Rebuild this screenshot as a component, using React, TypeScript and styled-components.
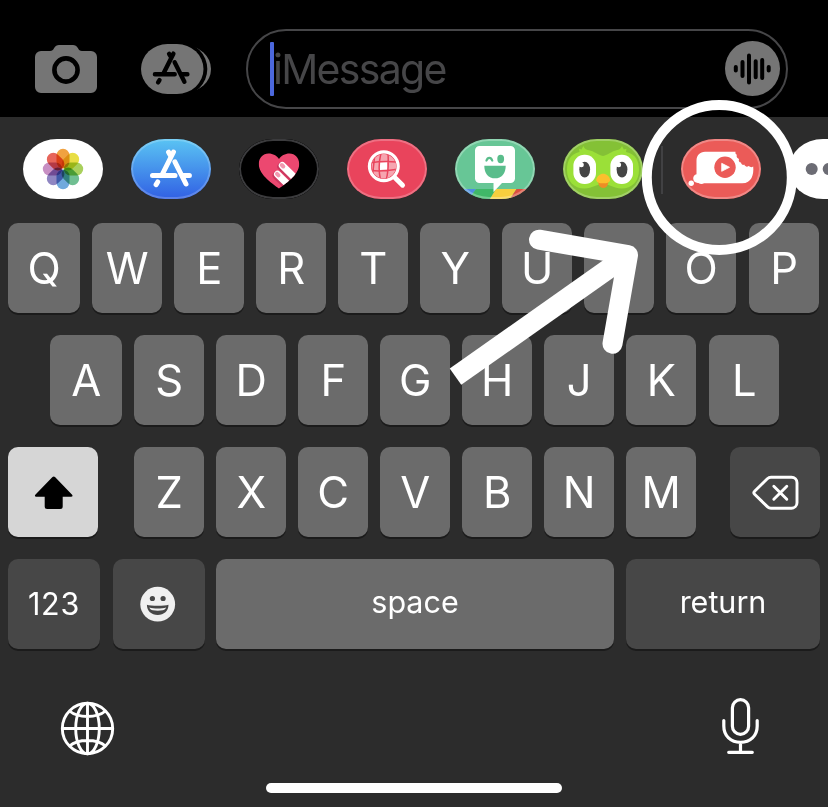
import React from "react";
import styled, { createGlobalStyle } from "styled-components";

const GlobalStyle = createGlobalStyle`
  * { box-sizing: border-box; }
  body { margin: 0; background: #2c2c2c; overflow: hidden; }
`;

const Screen = styled.main`
  position: relative;
  width: 828px;
  height: 807px;
  overflow: hidden;
  background: #2c2c2c;
  color: #fff;
  font-family: Inter, "Liberation Sans", sans-serif;
  display: flex;
  flex-direction: column;
  svg { display: block; flex: none; }
`;

const ComposeBar = styled.header`
  height: 117px;
  flex: none;
  background: #000;
  display: flex;
  align-items: center;
  padding: 21px 40px 0 35px;
`;

const BarIcon = styled.span<{ $gap: number }>`
  margin-right: ${(p) => p.$gap}px;
`;

const MessageField = styled.div`
  width: 542px;
  height: 80px;
  border: 2px solid #464648;
  border-radius: 40px;
  display: flex;
  align-items: center;
  padding: 0 6px 1px 22px;
`;

const Caret = styled.span`
  width: 4px;
  height: 54px;
  border-radius: 1px;
  background: #4c68dd;
`;

const Placeholder = styled.span`
  flex: 1;
  margin-left: -1px;
  padding-top: 1px;
  font-size: 41px;
  line-height: 50px;
  letter-spacing: -1.7px;
  color: #464648;
`;

const AppStrip = styled.nav`
  height: 106px;
  flex: none;
  display: flex;
  align-items: flex-start;
  padding: 22px 0 0 23px;
`;

const Tile = styled.div<{ $bg: string; $edge?: string; $gap?: number }>`
  position: relative;
  flex: none;
  width: 80px;
  height: 60px;
  margin-right: ${(p) => p.$gap ?? 28}px;
  border-radius: 34px / 30px;
  overflow: hidden;
  background: ${(p) => p.$bg};
  &::after {
    content: "";
    position: absolute;
    inset: 0;
    border-radius: inherit;
    border: 2px solid ${(p) => p.$edge ?? "transparent"};
  }
`;

const Divider = styled.span`
  flex: none;
  width: 2px;
  height: 48px;
  margin: 7px 18px 0 0;
  background: #414143;
`;

const Keys = styled.section`
  display: flex;
  flex-direction: column;
  gap: 22px;
`;

const Row = styled.div<{ $left: number }>`
  display: flex;
  padding-left: ${(p) => p.$left}px;
`;

const Key = styled.button<{ $w?: number; $gap?: number; $tone?: "dark" | "lit"; $label?: boolean }>`
  flex: none;
  width: ${(p) => p.$w ?? 70}px;
  height: 90px;
  margin: 0 ${(p) => p.$gap ?? 12}px 0 0;
  padding: 2px 0 0;
  border: 0;
  border-radius: 10px;
  display: flex;
  align-items: center;
  justify-content: center;
  background: ${(p) => (p.$tone === "dark" ? "#474747" : p.$tone === "lit" ? "#d6d6d6" : "#6b6b6b")};
  box-shadow: 0 2px 0 #1b1b1b;
  color: #fff;
  font-family: inherit;
  font-weight: 400;
  font-size: ${(p) => (p.$label ? 30.5 : 43.5)}px;
  line-height: 1;
  svg { overflow: visible; }
`;

const Label = styled.span<{ $drop?: number; $track?: number }>`
  padding-bottom: ${(p) => p.$drop ?? 0}px;
  letter-spacing: ${(p) => p.$track ?? 0}px;
`;

const Dock = styled.footer`
  flex: 1;
  display: flex;
  justify-content: space-between;
  align-items: flex-start;
  padding: 49px 68px 0 60px;
`;

const GlobeSlot = styled.span`
  padding-top: 3px;
`;

const HomeBar = styled.div`
  flex: none;
  width: 296px;
  height: 10px;
  margin: 0 auto 14px 266px;
  border-radius: 5px;
  background: #fff;
`;

const Markup = styled.svg`
  position: absolute;
  inset: 0;
  pointer-events: none;
`;

const StoreGlyph = ({ color, transform }: { color: string; transform?: string }) => (
  <g transform={transform} stroke={color} strokeWidth="5" strokeLinecap="round" fill="none">
    <path d="M42.500 13 31.200 35.500M37.600 13.200l2.400 4.200" />
    <path d="M21.500 36.500h22.500M51.700 36.500h6.700M26.700 43l-1.600 2.600" />
    <path d="M43.900 22.800 55 45" />
  </g>
);

const CameraIcon = () => (
  <svg width="62" height="48" viewBox="0 0 62 48">
    <path
      fill="#757575"
      d="M6 6h9c2.200 0 3-1 4-2.700C20.300 1 22 0 24 0h14c2 0 3.700 1 5 3.300C44 5 44.800 6 47 6h9a6 6 0 0 1 6 6v30a6 6 0 0 1-6 6H6a6 6 0 0 1-6-6V12a6 6 0 0 1 6-6z"
    />
    <circle cx="31" cy="25" r="11.600" fill="none" stroke="#000" strokeWidth="4.600" />
  </svg>
);

const AppsIcon = () => (
  <svg width="70" height="50" viewBox="0 0 70 50">
    <rect x="6" y="1.500" width="64" height="47" rx="26" ry="23.500" fill="#757575" />
    <rect x="0" y="-2" width="66.300" height="54" rx="27" fill="#000" />
    <rect width="62.500" height="50" rx="26.500" ry="25" fill="#757575" />
    <StoreGlyph color="#000" transform="translate(-5 -1.800) scale(.88)" />
  </svg>
);

const AudioIcon = () => (
  <svg width="55" height="55" viewBox="0 0 55 55">
    <circle cx="27.500" cy="27.500" r="27.500" fill="#757575" />
    <path
      d="M10.800 26v3.600M17.500 21v14M24 14.500v27M30.700 20.300v16M37.200 19v18M43.700 26v3.600"
      stroke="#000"
      strokeWidth="4"
      strokeLinecap="round"
    />
  </svg>
);

const petals = ["#f0a240", "#e8de45", "#a9d05c", "#70bf92", "#70a9dd", "#8f86c2", "#c78fc3", "#e7655a"];

const Petal = styled.rect`
  mix-blend-mode: multiply;
`;

const PhotosArt = () => (
  <svg width="80" height="60">
    {petals.map((c, i) => (
      <Petal
        key={c}
        x="33.500"
        y="9.800"
        width="13"
        height="19.500"
        rx="6.500"
        fill={c}
        transform={`rotate(${i * 45} 40 30)`}
      />
    ))}
  </svg>
);

const StoreArt = () => (
  <svg width="80" height="60">
    <StoreGlyph color="#fff" />
  </svg>
);

const HeartArt = () => (
  <svg width="80" height="60">
    <defs>
      <clipPath id="heart">
        <path d="M39.500 49.500C35 46 19.300 36.500 19.300 25c0-6.200 4.200-10.400 9.700-10.400 4.600 0 8.300 2.300 10.500 5.400 2.200-3.100 5.900-5.400 10.500-5.400 5.500 0 9.700 4.200 9.700 10.400C59.700 36.500 44 46 39.500 49.500z" />
      </clipPath>
    </defs>
    <g clipPath="url(#heart)" transform="translate(.5 0)">
      <rect width="80" height="60" fill="#ec4870" />
      <g strokeLinecap="round" fill="none">
        <path d="M41.700 27.500 57 43M37 36.500 52 51" stroke="#b92f55" strokeWidth="8" opacity=".6" />
        <path d="M42.800 26.500 58 41.500M38 35.300 53 50" stroke="#fff" strokeWidth="7" />
        <path d="m42.300 26 1.500 1.500M37.500 34.800l1.500 1.500" stroke="#f299b1" strokeWidth="4" />
      </g>
    </g>
  </svg>
);

const SearchArt = () => (
  <svg width="80" height="60">
    <defs>
      <clipPath id="lens">
        <circle cx="36.800" cy="27.300" r="12.400" />
      </clipPath>
    </defs>
    <path d="m48 38.700 7.600 7.600" stroke="#fff" strokeWidth="4.800" strokeLinecap="round" />
    <circle cx="36.800" cy="27.300" r="14.400" fill="#e9445c" stroke="#fff" strokeWidth="3.200" />
    <g clipPath="url(#lens)">
      <circle cx="36.800" cy="27.300" r="12.400" fill="#f6a5b0" />
      <path d="M33 23.500l7-.5.500 7.200-7.500.8z" fill="#fff" />
      <path
        d="M34 14c-2 8-2.500 18-.5 27M41 14c.5 9 1 18-2 27M23 24c9-2 18-2 28-1M23 31.500c9 1 18 .5 28-1.500M28 14l-3 27"
        stroke="#e9445c"
        strokeWidth="1.500"
        fill="none"
      />
    </g>
  </svg>
);

const WinkArt = () => (
  <svg width="80" height="60">
    <path d="M0 50h21l-7 10H0z" fill="#4f8fe0" />
    <path d="M21 50h20l-6 10H14z" fill="#40b768" />
    <path d="M41 50h20.500L55 60H35z" fill="#f6cf3e" />
    <path d="M61.500 50H80v10H55z" fill="#dc4f3f" />
    <path
      d="M24.500 7h31a4.500 4.500 0 0 1 4.500 4.500v28a4.500 4.500 0 0 1-4.500 4.500H47l-8.500 9V44h-14a4.500 4.500 0 0 1-4.500-4.500v-28A4.500 4.500 0 0 1 24.500 7z"
      fill="#fff"
    />
    <path d="M29.300 26.700h21.400c0 8-4.200 12.600-10.700 12.600s-10.700-4.600-10.700-12.600z" fill="#59bd8b" />
    <ellipse cx="45.700" cy="20" rx="3.400" ry="4.200" fill="#59bd8b" />
    <path d="M31.500 21.500c1.200-3.600 4.500-3.600 5.700 0" stroke="#59bd8b" strokeWidth="2.300" strokeLinecap="round" fill="none" />
  </svg>
);

const OwlArt = () => (
  <svg width="80" height="60">
    <path
      d="M20.300 7c1.200 3 2.700 3.700 5.700 4.200 5 .8 9 4.800 14 5.800 5-1 9-5 13.500-5.800 3-.5 4.200-1.500 5.500-4.200l1.800 3.500 2.700-.8-.5 3.300C73 15 76 22 76 31c0 11-7 18.500-17.500 18.500-8 0-11.500-4.500-18.500-4.500s-10.500 4.500-18.500 4.500C11 49.500 4 42 4 31c0-9 3-16 12.500-18l-.5-3.300 2.500.8z"
      fill="#9be038"
    />
    <rect x="10.400" y="15.700" width="22.600" height="29.300" rx="11" fill="#fff" />
    <rect x="47.400" y="15.700" width="22.600" height="29.300" rx="11" fill="#fff" />
    <ellipse cx="21.700" cy="30.600" rx="5.400" ry="7.900" fill="#454545" />
    <ellipse cx="59" cy="30.600" rx="5.400" ry="7.900" fill="#454545" />
    <circle cx="18.300" cy="25.800" r="2.500" fill="#fff" />
    <circle cx="55.600" cy="25.800" r="2.500" fill="#fff" />
    <path d="M35 41h10.500c0 5-2 8-5.200 8S35 46 35 41z" fill="#ee8d25" />
    <path d="M33.300 40.500C34 37.500 37 34.800 40.200 34.800s6.200 2.700 6.900 5.700c.5 3-3.500 3.800-6.900 3.800s-7.400-.8-6.900-3.800z" fill="#fcc02d" />
  </svg>
);

const ClipArt = () => (
  <svg width="80" height="60">
    <path
      d="M24 12.700h30.500c-.3 1.700.3 2.600 1.300 3-.7 2 .5 3.700 2.200 4.200-.8 2 .5 3.600 2 3.500.2 2 2 3 3.200 2.200 1 2 2.800 2.600 4.300 1.500 2 1.200 3.200 1.500 4.700.3.8 8-1.500 16.800-11 16.800H23c-1 1-4 1-5.500-.2-3 .3-5.300-1.700-5.300-4.400 0-2.400 1.300-3.900 3.300-4.400V21.500c0-5 3.500-8.800 8.500-8.800z"
      fill="#fff"
    />
    <circle cx="10.200" cy="44.300" r="2.700" fill="#fff" />
    <circle cx="44" cy="28.300" r="10.700" fill="#eb5b58" />
    <path d="M40.700 24.300v8l7.800-4z" fill="#fff" stroke="#fff" strokeWidth=".8" strokeLinejoin="round" />
  </svg>
);

const MoreArt = () => (
  <svg width="80" height="60" fill="#6c6c74">
    <circle cx="22.700" cy="30" r="6" />
    <circle cx="39.700" cy="30" r="6" />
    <circle cx="56.700" cy="30" r="6" />
  </svg>
);

const ShiftIcon = () => (
  <svg width="38" height="34" viewBox="-.7 0 38 34">
    <path
      d="M17.800 1c.8-.8 1.700-.8 2.500 0l17.100 17.700c.9 1 .3 2-.9 2H28v9.800a2.500 2.500 0 0 1-2.500 2.500h-13a2.500 2.500 0 0 1-2.500-2.500v-9.800H1.500c-1.200 0-1.700-1-.9-2z"
      fill="#000"
    />
  </svg>
);

const DeleteIcon = () => (
  <svg width="47" height="35" viewBox="0 .8 47 35" fill="none" stroke="#fff" strokeWidth="2.900" strokeLinejoin="round" strokeLinecap="round">
    <path d="M19 2h20.500a5.500 5.500 0 0 1 5.500 5.500v20a5.500 5.500 0 0 1-5.500 5.500H19c-1.600 0-2.600-.5-3.700-1.600L2.600 19c-1-1-1-2 0-3L15.300 3.600C16.400 2.500 17.400 2 19 2z" />
    <path d="m21.800 11 13 13M34.800 11l-13 13" />
  </svg>
);

const SmileIcon = () => (
  <svg width="36" height="36" viewBox="1.300 .8 36 36">
    <circle cx="18" cy="18" r="17.400" fill="#f0f0f0" />
    <circle cx="12.700" cy="12.300" r="2.600" fill="#474747" />
    <circle cx="23.400" cy="12.300" r="2.600" fill="#474747" />
    <path d="M7.200 18.500c3.600 1.300 18 1.300 21.600 0 0 6-4.500 10.300-10.800 10.300S7.200 24.500 7.200 18.500z" fill="#474747" />
    <path d="M9.600 21.200c4.500 1.300 12.300 1.300 16.800 0-.8 2-2 2.600-3.500 2.900-3 .5-6.800.5-9.800 0-1.500-.3-2.700-.9-3.500-2.900z" fill="#f0f0f0" />
  </svg>
);

const GlobeIcon = () => (
  <svg width="55" height="55" viewBox="0 0 55 55" fill="none" stroke="#fff" strokeWidth="2.900">
    <circle cx="27.500" cy="27.500" r="25.200" />
    <ellipse cx="27.500" cy="27.500" rx="11.800" ry="25.200" />
    <path d="M27.500 2v51M2 27.500h51M9.500 10c8.500 7.300 27.500 7.300 36 0M9.500 45c8.500-7.300 27.500-7.300 36 0" />
  </svg>
);

const MicIcon = () => (
  <svg width="38" height="57" viewBox="0 0 38 57" fill="none" stroke="#fff" strokeWidth="3.200" strokeLinecap="round">
    <rect x="10.400" y="1.700" width="16.200" height="34.600" rx="8.100" />
    <path d="M1.800 22.500V28c0 10 7 16.300 16.700 16.300S35.200 38 35.200 28v-5.500M18.500 44.500v9.300M6.700 54.300h23.600" />
  </svg>
);

const LetterRow = ({ letters, left }: { letters: string; left: number }) => (
  <Row $left={left}>
    {letters.split("").map((l, i) => (
      <Key key={l} $w={i === 0 ? 72 : 70} $gap={i === letters.length - 2 ? 13 : 12}>
        <Label $drop={1} $track={-0.5}>{l}</Label>
      </Key>
    ))}
  </Row>
);

export default function App() {
  return (
    <Screen>
      <GlobalStyle />
      <ComposeBar>
        <BarIcon $gap={44}><CameraIcon /></BarIcon>
        <BarIcon $gap={35}><AppsIcon /></BarIcon>
        <MessageField>
          <Caret />
          <Placeholder>iMessage</Placeholder>
          <AudioIcon />
        </MessageField>
      </ComposeBar>

      <AppStrip>
        <Tile $bg="#fff"><PhotosArt /></Tile>
        <Tile $bg="linear-gradient(#5ac4f3, #3160e4)" $edge="rgba(255,255,255,.2)"><StoreArt /></Tile>
        <Tile $bg="#000" $edge="#3b3b3d"><HeartArt /></Tile>
        <Tile $bg="#e9445c" $edge="rgba(255,255,255,.24)"><SearchArt /></Tile>
        <Tile $bg="#67c696" $edge="rgba(255,255,255,.28)"><WinkArt /></Tile>
        <Tile $bg="#84c136" $edge="rgba(255,255,255,.24)" $gap={18}><OwlArt /></Tile>
        <Divider />
        <Tile $bg="#eb5b58" $edge="rgba(255,255,255,.28)"><ClipArt /></Tile>
        <Tile $bg="#fff"><MoreArt /></Tile>
      </AppStrip>

      <Keys>
        <LetterRow letters="QWERTYUIOP" left={8} />
        <LetterRow letters="ASDFGHJKL" left={50} />
        <Row $left={8}>
          <Key $w={90} $gap={36} $tone="lit" aria-label="Shift"><ShiftIcon /></Key>
          {"ZXCVBNM".split("").map((l) => (
            <Key key={l} $gap={l === "M" ? 34 : 12}><Label $drop={1} $track={-0.5}>{l}</Label></Key>
          ))}
          <Key $w={90} $gap={0} $tone="dark" aria-label="Delete"><DeleteIcon /></Key>
        </Row>
        <Row $left={8}>
          <Key $w={92} $gap={13} $tone="dark" $label><Label $drop={2} $track={0.7}>123</Label></Key>
          <Key $w={92} $gap={11} $tone="dark" aria-label="Emoji"><SmileIcon /></Key>
          <Key $w={398} $label><Label $drop={6}>space</Label></Key>
          <Key $w={194} $gap={0} $tone="dark" $label><Label $drop={6}>return</Label></Key>
        </Row>
      </Keys>

      <Dock>
        <GlobeSlot><GlobeIcon /></GlobeSlot>
        <MicIcon />
      </Dock>
      <HomeBar />

      <Markup width="828" height="807" fill="none" stroke="#fff">
        <circle cx="719.300" cy="177.500" r="72.500" strokeWidth="10" />
        <path d="M455.500 376.700 628 255" strokeWidth="20" />
        <path d="M539 239.700 628 255l-15.500 88.700" strokeWidth="20" strokeLinecap="round" strokeLinejoin="round" />
      </Markup>
    </Screen>
  );
}
